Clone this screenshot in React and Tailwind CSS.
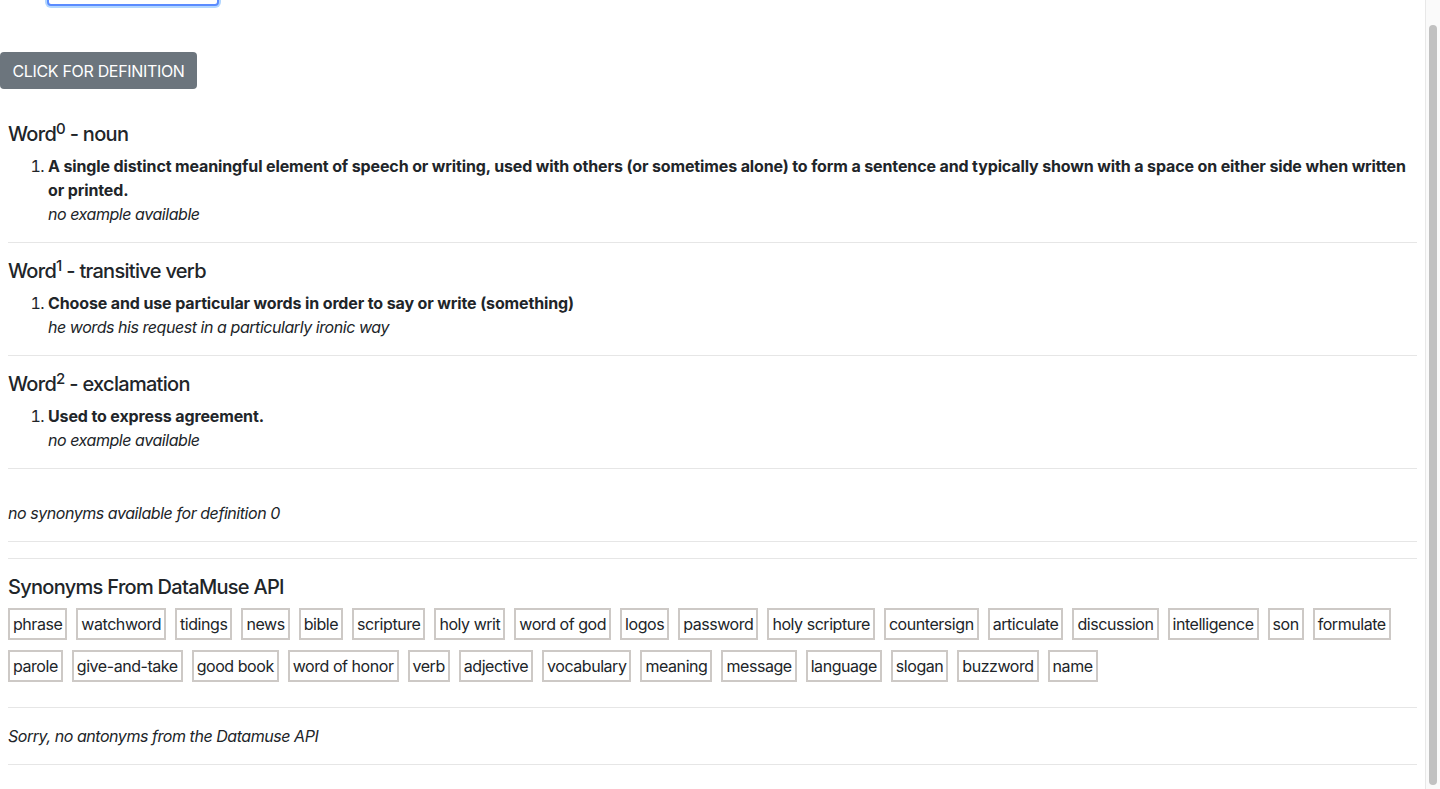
import React from 'react';

const definitions = [
    {
        index: 0,
        type: "noun",
        definition: "A single distinct meaningful element of speech or writing, used with others (or sometimes alone) to form a sentence and typically shown with a space on either side when written or printed.",
        example: "no example available",
    },
    {
        index: 1,
        type: "transitive verb",
        definition: "Choose and use particular words in order to say or write (something)",
        example: "he words his request in a particularly ironic way",
    },
    {
        index: 2,
        type: "exclamation",
        definition: "Used to express agreement.",
        example: "no example available",
    },
];

const synonymRows = [
    ["phrase", "watchword", "tidings", "news", "bible", "scripture", "holy writ", "word of god", "logos", "password", "holy scripture", "countersign", "articulate", "discussion", "intelligence", "son", "formulate"],
    ["parole", "give-and-take", "good book", "word of honor", "verb", "adjective", "vocabulary", "meaning", "message", "language", "slogan", "buzzword", "name"],
];

const Rule = () => <hr className="my-4 border-0 border-t border-[#e6e6e6]" />;

const App = () => {
    return (
        <div className="flex h-[789px] overflow-hidden bg-white text-base leading-6 tracking-[-0.028em] text-[#212529] font-['Inter','Liberation_Sans',sans-serif]">
            <main className="min-w-0 flex-1">
                {/* search input, scrolled mostly out of view */}
                <div className="pl-[47px]">
                    <div className="-mt-[32px] h-[38px] w-[172px] rounded border-2 border-[#5b8cff] bg-white shadow-[0_0_0_2px_rgba(0,123,255,0.3)]"></div>
                </div>

                <button className="mt-[46px] h-[37px] w-[197px] rounded bg-[#6c757d] text-center text-base tracking-[-0.02em] text-white">
                    CLICK FOR DEFINITION
                </button>

                <div className="px-2 pt-[33px]">
                    {definitions.map((d) => (
                        <div key={d.index}>
                            <h5 className="mb-2 text-xl font-medium leading-6 tracking-[-0.035em]">
                                Word<sup>{d.index}</sup> - {d.type}
                            </h5>
                            <ol className="list-decimal pl-10">
                                <li>
                                    <strong className="font-bold tracking-[-0.008em]">{d.definition}</strong>
                                    <br />
                                    <em>{d.example}</em>
                                </li>
                            </ol>
                            <Rule />
                        </div>
                    ))}

                    <p className="mt-8 italic">no synonyms available for definition 0</p>
                    <Rule />
                    <Rule />

                    <h5 className="mb-[9px] text-xl font-medium leading-6 tracking-[-0.035em]">Synonyms From DataMuse API</h5>
                    <div className="flex flex-col gap-[10px] pb-[9px]">
                        {synonymRows.map((row, r) => (
                            <div key={r} className="flex gap-[9px]">
                                {row.map((word) => (
                                    <span key={word} className="flex h-[32px] items-center whitespace-nowrap border-2 border-[#cdc9c6] px-[3px]">
                                        {word}
                                    </span>
                                ))}
                            </div>
                        ))}
                    </div>
                    <Rule />
                    <p className="italic">Sorry, no antonyms from the Datamuse API</p>
                    <Rule />
                </div>
            </main>

            {/* scrollbar */}
            <div className="w-[15px] shrink-0 border-l border-[#e8e8e8] bg-[#fafafa] pl-[3px] pt-[25px]">
                <div className="h-[760px] w-[8px] rounded-full bg-[#c1c1c1]"></div>
            </div>
        </div>
    );
};

export default App;
